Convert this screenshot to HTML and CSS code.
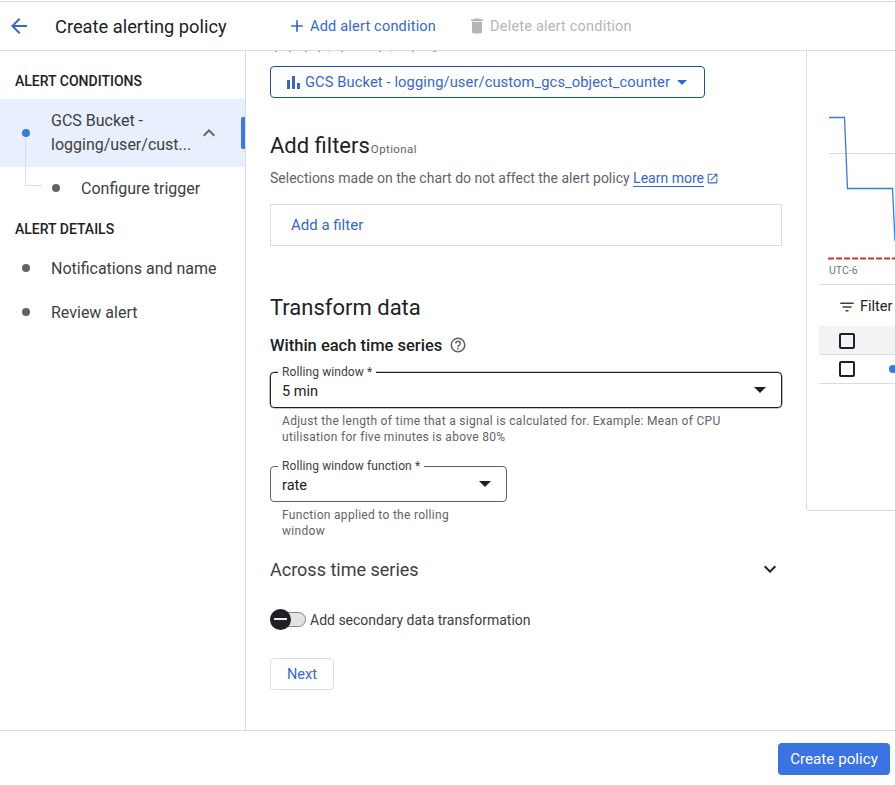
FILE: index.html
```html
<!DOCTYPE html>
<html lang="en">
<head>
    <meta charset="UTF-8">
    <meta name="viewport" content="width=device-width, initial-scale=1.0">
    <title>Create alerting policy</title>
    <link rel="stylesheet" href="styles.css">
</head>
<body>
    <header class="topbar">
        <svg class="back-icon" width="24" height="24" viewBox="0 0 24 24"><path d="M20 11H7.83l5.59-5.59L12 4l-8 8 8 8 1.41-1.41L7.83 13H20z"/></svg>
        <h1 class="page-title">Create alerting policy</h1>
        <button class="top-action">
            <svg width="20" height="20" viewBox="0 0 24 24"><path d="M19 13h-6v6h-2v-6H5v-2h6V5h2v6h6z"/></svg>
            Add alert condition
        </button>
        <button class="top-action disabled">
            <svg width="20" height="20" viewBox="0 0 24 24"><path d="M6 19c0 1.100.9 2 2 2h8c1.100 0 2-.9 2-2V7H6zM19 4h-3.500l-1-1h-5l-1 1H5v2h14z"/></svg>
            Delete alert condition
        </button>
    </header>

    <div class="workspace">
        <nav class="sidebar">
            <div class="nav-heading first">ALERT CONDITIONS</div>
            <div class="step-selected">
                <span class="dot blue"></span>
                <span class="step-label">GCS Bucket -<br>logging/user/cust...</span>
                <svg class="chevron-up" width="24" height="24" viewBox="0 0 24 24"><path d="M12 8l-6 6 1.410 1.410L12 10.830l4.590 4.580L18 14z"/></svg>
                <span class="selected-bar"></span>
            </div>
            <div class="step-child">
                <span class="tree-line"></span>
                <span class="dot grey"></span>
                <span>Configure trigger</span>
            </div>
            <div class="nav-heading second">ALERT DETAILS</div>
            <div class="step"><span class="dot grey"></span><span>Notifications and name</span></div>
            <div class="step"><span class="dot grey"></span><span>Review alert</span></div>
        </nav>

        <main class="form-pane">
            <!-- bottoms of the scrolled-away label -->
            <svg class="scroll-ticks" width="180" height="2" viewBox="0 0 180 2">
                <path d="M5 0h2v1H5zM19 0h2v1h-2zM35 0h2v1h-2zM48 0h2v1h-2zM59 0h1v1h-1zM71 0h2v1h-2zM109 0h2v1h-2zM120 0h1v1h-1zM142 0h2v1h-2zM163 0h3v1h-3z"/>
            </svg>
            <button class="metric-button">
                <svg width="16" height="16" viewBox="0 0 16 16"><path d="M2 6h3v9H2zM7 2h3v13H7zM12 9h3v6h-3z"/></svg>
                <span>GCS Bucket - logging/user/custom_gcs_object_counter</span>
                <span class="caret small"></span>
            </button>

            <h2 class="section-title filters-title">Add filters<span class="optional">Optional</span></h2>
            <p class="filter-note">Selections made on the chart do not affect the alert policy <a class="learn-link">Learn more</a>
                <svg class="open-icon" width="13" height="13" viewBox="0 0 24 24"><path d="M19 19H5V5h7V3H5a2 2 0 0 0-2 2v14a2 2 0 0 0 2 2h14a2 2 0 0 0 2-2v-7h-2zM14 3v2h3.590l-9.830 9.830 1.410 1.410L19 6.410V10h2V3z"/></svg>
            </p>
            <div class="filter-box">Add a filter</div>

            <h2 class="section-title transform-title">Transform data</h2>
            <div class="within-title">
                Within each time series
                <svg width="18" height="18" viewBox="0 0 24 24"><path d="M11 18h2v-2h-2zm1-16a10 10 0 1 0 0 20 10 10 0 0 0 0-20zm0 18a8 8 0 1 1 0-16 8 8 0 0 1 0 16zm0-14a4 4 0 0 0-4 4h2a2 2 0 1 1 4 0c0 2-3 1.750-3 5h2c0-2.250 3-2.500 3-5a4 4 0 0 0-4-4z"/></svg>
            </div>

            <div class="select-field wide">
                <span class="field-label">Rolling window *</span>
                <span class="field-value">5 min</span>
                <span class="caret"></span>
            </div>
            <p class="hint wide-hint">Adjust the length of time that a signal is calculated for. Example: Mean of CPU utilisation for five minutes is above 80%</p>

            <div class="select-field narrow">
                <span class="field-label">Rolling window function *</span>
                <span class="field-value">rate</span>
                <span class="caret"></span>
            </div>
            <p class="hint narrow-hint">Function applied to the rolling window</p>

            <div class="across-row">
                <span>Across time series</span>
                <svg width="24" height="24" viewBox="0 0 24 24"><path d="M16.590 8.590L12 13.170 7.410 8.590 6 10l6 6 6-6z"/></svg>
            </div>

            <div class="toggle-row">
                <span class="toggle"><span class="toggle-knob"></span></span>
                <span class="toggle-text">Add secondary data transformation</span>
            </div>

            <button class="next-button">Next</button>
        </main>

        <aside class="chart-pane">
            <div class="chart-card">
                <svg class="chart" width="89" height="213" viewBox="0 0 89 213">
                    <line x1="23" y1="102.500" x2="89" y2="102.500" stroke="#dadce0"/>
                    <polyline points="23,66.500 38.500,66.500 41.500,137.500 86.500,137.500 89,190" fill="none" stroke="#3b78e7" stroke-width="1.300"/>
                    <line x1="22" y1="207.500" x2="89" y2="207.500" stroke="#d93025" stroke-width="2" stroke-dasharray="6 2"/>
                </svg>
                <div class="utc-label">UTC-6</div>
                <div class="filter-row">
                    <svg width="18" height="18" viewBox="0 0 24 24"><path d="M10 18h4v-2h-4zM3 6v2h18V6zm3 7h12v-2H6z"/></svg>
                    <span>Filter</span>
                </div>
                <div class="table-row table-head"><span class="checkbox"></span></div>
                <div class="table-row"><span class="checkbox"></span><span class="dot blue series-dot"></span></div>
            </div>
        </aside>
    </div>

    <footer class="footer">
        <button class="create-button">Create policy</button>
    </footer>
</body>
</html>
```

FILE: styles.css
```css
* {
    box-sizing: border-box;
}
body {
    margin: 0;
    width: 895px;
    height: 785px;
    overflow: hidden;
    font-family: Roboto, "Liberation Sans", sans-serif;
    font-size: 14.5px;
    color: #3c4043;
    background: white;
    display: flex;
    flex-direction: column;
}
button {
    font-family: inherit;
}

/* top bar */
.topbar {
    flex: none;
    height: 50px;
    margin-top: 1px;
    border-top: 1px solid #dadce0;
    border-bottom: 1px solid #dadce0;
    display: flex;
    align-items: center;
    padding-left: 7px;
}
.back-icon {
    fill: #3367d6;
}
.page-title {
    margin: 0 0 0 24px;
    width: 232px;
    font-size: 18.3px;
    font-weight: 400;
    color: #202124;
}
.top-action {
    display: flex;
    align-items: center;
    gap: 3px;
    padding: 0;
    border: none;
    background: none;
    color: #3367d6;
    font-size: 14.5px;
    font-weight: 400;
    letter-spacing: 0.2px;
    fill: #3367d6;
}
.top-action.disabled {
    margin-left: 31px;
    color: #b4b6b8;
    fill: #b4b6b8;
}

/* layout */
.workspace {
    flex: 1;
    display: flex;
    min-height: 0;
}
.sidebar {
    flex: none;
    width: 246px;
    border-right: 1px solid #dadce0;
    color: #3c4043;
    font-size: 16px;
}
.form-pane {
    flex: none;
    width: 560px;
    padding: 0 24px;
    overflow: hidden;
}
.chart-pane {
    flex: 1;
    min-width: 0;
    overflow: hidden;
}

/* sidebar */
.nav-heading {
    padding-left: 15px;
    font-size: 14px;
    font-weight: 500;
    color: #202124;
    line-height: 18px;
}
.nav-heading.first {
    padding-top: 21px;
    height: 48px;
}
.nav-heading.second {
    height: 35px;
    padding-top: 9px;
}
.dot {
    flex: none;
    position: relative;
    z-index: 1;
    width: 8px;
    height: 8px;
    border-radius: 50%;
}
.dot.blue {
    background: #3b78e7;
}
.dot.grey {
    background: #5f6368;
}
.step-selected {
    position: relative;
    height: 68px;
    background: #e8f0fe;
    display: flex;
    align-items: center;
    padding-left: 22px;
    line-height: 24px;
}
.step-label {
    margin-left: 21px;
    width: 144px;
    white-space: nowrap;
}
.chevron-up {
    margin-left: 2px;
    fill: #5f6368;
}
.selected-bar {
    position: absolute;
    right: 0;
    top: 18px;
    width: 4px;
    height: 32px;
    border-radius: 2px 0 0 2px;
    background: #3b78e7;
}
.step-child {
    position: relative;
    height: 44px;
    display: flex;
    align-items: center;
    padding: 0 0 2px 52px;
    gap: 21px;
}
.tree-line {
    position: absolute;
    left: 25px;
    top: -35px;
    width: 17px;
    height: 54px;
    border-left: 1px solid #dadce0;
    border-bottom: 1px solid #dadce0;
}
.step {
    height: 44px;
    display: flex;
    align-items: center;
    padding-left: 22px;
    gap: 21px;
}

/* form */
.scroll-ticks {
    display: block;
    fill: #9aa0a6;
}
.metric-button {
    width: 435px;
    height: 32px;
    margin-top: 13px;
    padding: 0 0 0 14px;
    display: flex;
    align-items: center;
    gap: 4px;
    background: white;
    border: 1px solid #1f4fa3;
    border-radius: 4px;
    color: #3367d6;
    fill: #3367d6;
    font-size: 14.7px;
    letter-spacing: 0.1px;
}
.caret {
    width: 0;
    height: 0;
    border-left: 6px solid transparent;
    border-right: 6px solid transparent;
    border-top: 6px solid #202124;
    margin-left: auto;
}
.caret.small {
    margin: 0 0 0 3px;
    border-left-width: 5px;
    border-right-width: 5px;
    border-top: 5px solid #3367d6;
}
.section-title {
    margin: 0;
    font-size: 22px;
    font-weight: 400;
    color: #202124;
    line-height: 30px;
}
.filters-title {
    margin-top: 33px;
}
.optional {
    margin-left: 1px;
    font-size: 11.5px;
    color: #5f6368;
    letter-spacing: 0.4px;
}
.filter-note {
    margin: 5px 0 0;
    font-size: 14px;
    line-height: 18px;
    color: #5f6368;
    white-space: nowrap;
}
.learn-link {
    color: #3367d6;
    border-bottom: 1px solid #3367d6;
}
.open-icon {
    margin-left: -1px;
    fill: #3367d6;
    vertical-align: -2px;
}
.filter-box {
    margin-top: 17px;
    height: 42px;
    width: 512px;
    padding-left: 20px;
    display: flex;
    align-items: center;
    border: 1px solid #dadce0;
    color: #3367d6;
    font-size: 15px;
}
.transform-title {
    margin-top: 47px;
}
.within-title {
    margin-top: 10px;
    height: 24px;
    display: flex;
    align-items: center;
    gap: 7px;
    font-size: 16.5px;
    font-weight: 500;
    color: #202124;
    fill: #5f6368;
}
.select-field {
    position: relative;
    height: 36px;
    padding: 0 15px 0 11px;
    display: flex;
    align-items: center;
    border-radius: 4px;
    color: #202124;
}
.select-field.wide {
    width: 512px;
    margin-top: 15px;
    border: 1px solid #202124;
    box-shadow: 0 0 0 0.3px #202124;
}
.select-field.narrow {
    width: 237px;
    margin-top: 21px;
    border: 1px solid #5f6368;
}
.field-value {
    padding-top: 2px;
}
.field-label {
    position: absolute;
    left: 7px;
    top: -7px;
    padding: 0 4px;
    background: white;
    font-size: 12px;
    line-height: 12px;
    color: #3c4043;
    letter-spacing: 0.1px;
}
.hint {
    margin: 5px 0 0;
    padding-left: 12px;
    font-size: 12px;
    line-height: 16px;
    color: #5f6368;
    letter-spacing: 0.3px;
}
.wide-hint {
    width: 480px;
}
.narrow-hint {
    width: 200px;
}
.across-row {
    margin-top: 16px;
    width: 512px;
    height: 28px;
    display: flex;
    align-items: center;
    justify-content: space-between;
    font-size: 18px;
    color: #3c4043;
    fill: #202124;
}
.toggle-row {
    margin-top: 24px;
    height: 24px;
    display: flex;
    align-items: center;
    gap: 4px;
    color: #3c4043;
    font-size: 14px;
}
.toggle-text {
    padding-top: 2px;
}
.toggle {
    position: relative;
    width: 36px;
    height: 15px;
    border: 1px solid #80868b;
    border-radius: 8px;
    background: #e3e3e3;
}
.toggle-knob {
    position: absolute;
    left: -1px;
    top: -4px;
    width: 21px;
    height: 21px;
    border-radius: 50%;
    background: #202124;
}
.toggle-knob::after {
    content: "";
    position: absolute;
    left: 4px;
    top: 9px;
    width: 13px;
    height: 2px;
    background: #e8eaed;
}
.next-button {
    display: block;
    margin-top: 27px;
    width: 64px;
    height: 32px;
    padding: 0;
    background: white;
    border: 1px solid #dadce0;
    border-radius: 4px;
    color: #3367d6;
    font-size: 14.5px;
}

/* chart */
.chart-card {
    height: 460px;
    border-left: 1px solid #dadce0;
    border-bottom: 1px solid #dadce0;
    border-bottom-left-radius: 4px;
    padding-left: 12px;
}
.chart {
    display: block;
    margin-left: -13px;
}
.utc-label {
    margin-left: 10px;
    font-size: 10.5px;
    line-height: 13px;
    color: #70757a;
    height: 20px;
}
.filter-row {
    height: 42px;
    padding: 2px 0 0 19px;
    border-top: 1px solid #dadce0;
    display: flex;
    align-items: center;
    gap: 4px;
    color: #202124;
    fill: #3c4043;
    white-space: nowrap;
}
.table-row {
    position: relative;
    height: 29px;
    padding-left: 20px;
    display: flex;
    align-items: center;
    border-bottom: 1px solid #dadce0;
}
.table-head {
    padding-top: 2px;
    background: #f1f3f4;
}
.checkbox {
    flex: none;
    width: 16px;
    height: 16px;
    border: 2px solid #202124;
    border-radius: 2px;
}
.series-dot {
    margin-left: 34px;
}

/* footer */
.footer {
    flex: none;
    height: 55px;
    border-top: 1px solid #dadce0;
    display: flex;
    justify-content: flex-end;
    padding: 12px 5px 0 0;
}
.create-button {
    width: 112px;
    height: 32px;
    border: none;
    border-radius: 4px;
    background: #3b73e2;
    color: white;
    font-size: 15.2px;
}
```
